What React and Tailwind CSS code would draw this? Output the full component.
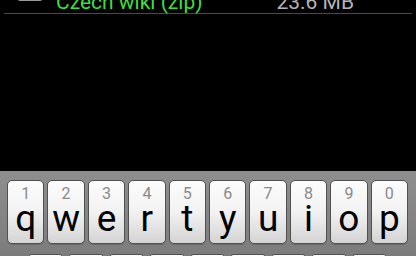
import React from 'react';

const font = { fontFamily: 'Roboto, "Noto Sans", sans-serif' };

const topRow = [
  ['1', 'q'], ['2', 'w'], ['3', 'e'], ['4', 'r'], ['5', 't'],
  ['6', 'y'], ['7', 'u'], ['8', 'i'], ['9', 'o'], ['0', 'p'],
];
const homeRow = ['a', 's', 'd', 'f', 'g', 'h', 'j', 'k', 'l'];

const Key = ({ hint, letter }) => (
  <div className="h-[64px] rounded-[5px] border border-[#505050] bg-gradient-to-b from-[#fcfcfc] via-[#f2f2f2] to-[#d4d4d4] flex flex-col items-center shadow-[0_1px_0_#6a6a6a]">
    <span className="mt-[5px] text-[16px] leading-[16px] text-[#8a8a8a]">{hint}</span>
    <span className="mt-[-3px] text-[37px] leading-[40px] text-black">{letter}</span>
  </div>
);

export default function App() {
  return (
    <div className="w-[416px] h-[256px] overflow-hidden bg-black flex flex-col" style={font}>
      {/* list item, scrolled so only its bottom shows */}
      <div className="mt-[-34px] h-[48px] mx-[4px] border-b border-[#4a4a4a] flex items-end shrink-0">
        <div className="ml-[13px] w-[26px] h-[26px] mb-[12px] rounded-[3px] border border-[#9a9a9a] bg-[#3a3a3a]" />
        <span className="ml-[13px] text-[21px] leading-[22px] text-[#3ddf3d]">Czech wiki (zip)</span>
        <span className="ml-auto mr-[58px] text-[21px] leading-[22px] text-[#b4b4b4]">23.6 MB</span>
      </div>

      <div className="flex-1" />

      {/* keyboard */}
      <div className="h-[85px] shrink-0 bg-gradient-to-b from-[#8e8e8e] to-[#7c7c7c] pt-[9px] pl-[7px] pr-[8px] flex flex-col gap-[10px]">
        <div className="grid grid-cols-10 gap-x-[3px] shrink-0">
          {topRow.map(([h, l]) => (
            <Key key={l} hint={h} letter={l} />
          ))}
        </div>
        <div className="grid grid-cols-9 gap-x-[3px] pl-[20px] pr-[20px] shrink-0">
          {homeRow.map((l) => (
            <Key key={l} hint="" letter={l} />
          ))}
        </div>
      </div>
    </div>
  );
}
